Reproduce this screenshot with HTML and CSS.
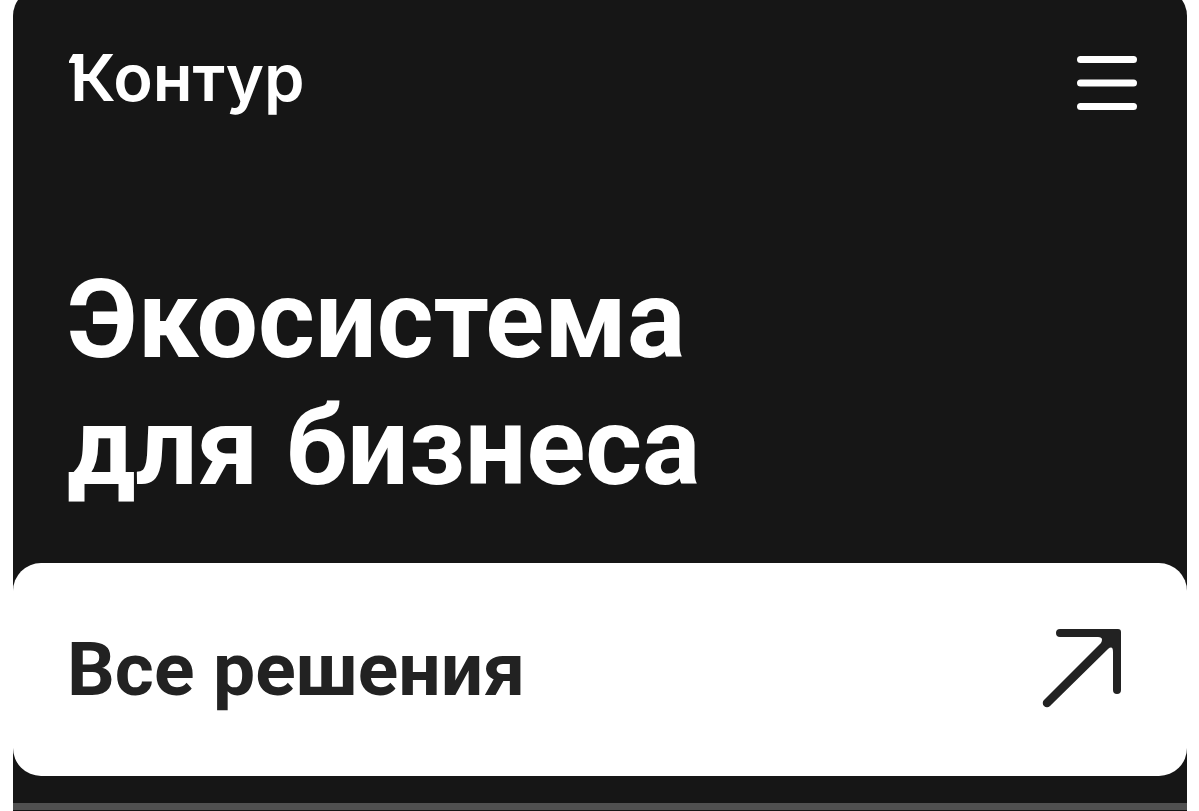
FILE: index.html
```html
<!DOCTYPE html>
<html lang="ru">
<head>
<meta charset="utf-8">
<meta name="viewport" content="width=device-width, initial-scale=1">
<title>Контур</title>
<link rel="stylesheet" href="styles.css">
</head>
<body>
<div class="page">
  <header class="header">
    <a class="logo" href="#"><svg class="logo-flag" viewBox="0 0 12 9" aria-hidden="true"><path d="M4 0H12V9H0V7Z"/></svg>Контур</a>
    <button class="menu" type="button" aria-label="Меню">
      <svg viewBox="0 0 60 54" aria-hidden="true"><rect width="60" height="7" rx="3.500"/><rect y="23.500" width="60" height="7" rx="3.500"/><rect y="47" width="60" height="7" rx="3.500"/></svg>
    </button>
  </header>
  <main>
    <h1 class="title">Экосистема<br>для бизнеса</h1>
    <a class="card" href="#">
      <span class="card-label">Все решения</span>
      <svg class="arrow" viewBox="0 0 80 80" aria-hidden="true"><path d="M18 1H76Q79 1 79 4V62A4 4 0 0 1 71 62V24Q71 17 66 21L8 78A4 4 0 0 1 2 72L59 15Q62 9 56 9H18A4 4 0 0 1 18 1Z"/></svg>
    </a>
  </main>
  <div class="divider"></div>
</div>
</body>
</html>
```
FILE: styles.css
```css
* { box-sizing: border-box; }
body { margin: 0; background: #fff; font-family: Roboto, Arial, sans-serif; overflow-x: hidden; }
.page { margin: -12px 12px 0 13px; background: #161616; border-radius: 28px 28px 0 0; border-bottom: 1px solid #161616; }
.header { display: flex; justify-content: space-between; align-items: flex-start; padding: 52px 50px 0 57px; }
.logo { position: relative; color: #fff; font-family: Inter, sans-serif; font-size: 65px; line-height: 76px; font-weight: 600; text-decoration: none; }
.logo-flag { position: absolute; left: -1px; top: 14px; width: 12px; height: 9px; fill: #fff; }
.menu { display: block; padding: 0; margin-top: 16px; border: 0; background: none; cursor: pointer; }
.menu svg { display: block; width: 60px; height: 54px; fill: #fff; }
.title { margin: 0; padding: 141px 54px 52px; color: #fff; font-size: 109px; line-height: 127px; font-weight: 700; }
.card { display: flex; justify-content: space-between; align-items: center; padding: 65px 65px 68px 54px; border-radius: 28px; background: #fff; color: #222; text-decoration: none; }
.card-label { padding-top: 2px; font-size: 75px; line-height: 78px; font-weight: 700; }
.arrow { flex: none; width: 80px; height: 80px; fill: #222; }
.divider { margin-top: 27px; height: 7px; background: #505050; }
```
